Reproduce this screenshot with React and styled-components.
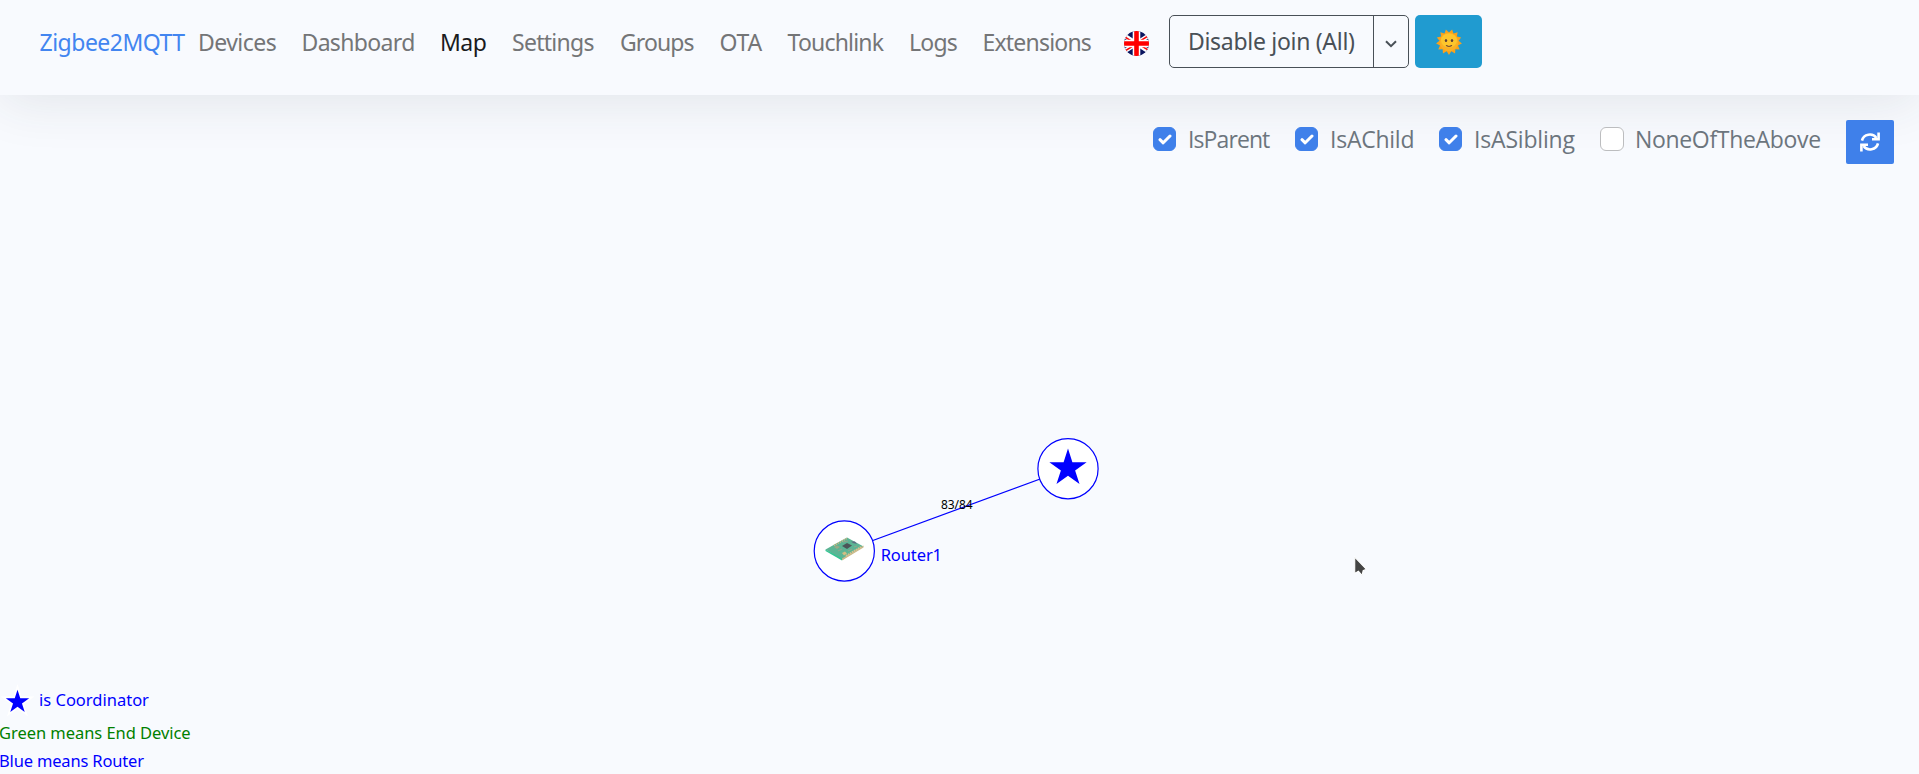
import React from 'react';
import styled, { createGlobalStyle } from 'styled-components';

const GlobalStyle = createGlobalStyle`
  *, *::before, *::after { box-sizing: border-box; }
  body {
    margin: 0;
    background: #f8fafe;
    color: #495057;
    font-family: "Noto Sans", "Open Sans", sans-serif;
  }
`;

const Page = styled.div`
  display: flex;
  flex-direction: column;
  height: 774px;
  overflow: hidden;
`;

const Navbar = styled.nav`
  display: flex;
  align-items: flex-start;
  height: 95px;
  padding: 15px 0 0 39.5px;
  flex: none;
  box-shadow: 0 6px 54px rgba(41, 58, 66, 0.11);
`;

const Brand = styled.a`
  width: 146.5px;
  line-height: 54px;
  font-size: 23px;
  letter-spacing: -0.5px;
  white-space: nowrap;
  color: #4285f0;
`;

const NavLink = styled.a`
  width: ${(p) => p.$width}px;
  padding-left: 12px;
  line-height: 54px;
  font-size: 23px;
  letter-spacing: ${(p) => p.$tracking}px;
  white-space: nowrap;
  color: ${(p) => (p.$active ? '#1a1b1d' : '#747577')};
`;

const FlagIcon = styled.svg`
  width: 25px;
  height: 25px;
  margin: 16px 20px 0 0;
  flex: none;
`;

const ButtonGroup = styled.div`
  display: flex;
  height: 53px;
  width: 240px;
  border: 1px solid #495057;
  border-radius: 5px;
`;

const JoinButton = styled.button`
  width: 204px;
  padding: 0 0 0 18px;
  border: 0;
  border-right: 1px solid #495057;
  background: none;
  text-align: left;
  font: 23px/51px "Noto Sans", sans-serif;
  letter-spacing: -0.3px;
  white-space: nowrap;
  color: #495057;
`;

const CaretButton = styled.button`
  display: flex;
  flex: 1;
  align-items: center;
  justify-content: center;
  padding: 4px 0 0;
  border: 0;
  background: none;
`;

const ThemeButton = styled.button`
  display: flex;
  align-items: center;
  justify-content: center;
  width: 67px;
  height: 53px;
  margin-left: 6px;
  padding: 0;
  border: 0;
  border-radius: 5px;
  background: #209bd0;
`;

const Filters = styled.form`
  display: flex;
  align-items: flex-start;
  justify-content: flex-end;
  height: 69px;
  padding: 25px 25px 0 0;
  flex: none;
`;

const FilterLabel = styled.label`
  display: flex;
  align-items: center;
  width: ${(p) => p.$width}px;
  height: 38px;
  font-family: "Open Sans", sans-serif;
  font-size: 23px;
  letter-spacing: ${(p) => p.$tracking}px;
  white-space: nowrap;
  color: #6c757d;
`;

const Checkbox = styled.span`
  display: flex;
  align-items: center;
  justify-content: center;
  width: ${(p) => (p.$checked ? 23 : 24)}px;
  height: 24px;
  margin-right: ${(p) => (p.$checked ? 12 : 11)}px;
  flex: none;
  border: 1px solid ${(p) => (p.$checked ? '#3f80ea' : '#bcbdbf')};
  border-radius: 6px;
  background: ${(p) => (p.$checked ? '#3f80ea' : '#fff')};
`;

const RefreshButton = styled.button`
  display: flex;
  align-items: center;
  justify-content: center;
  width: 48px;
  height: 44px;
  padding: 0;
  border: 0;
  border-radius: 2px;
  background: #3f80ea;
`;

const MapArea = styled.main`
  position: relative;
  flex: 1;
`;

const Graph = styled.svg`
  display: block;
  width: 100%;
  height: 100%;
`;

const Legend = styled.div`
  position: absolute;
  left: -1px;
  bottom: 0;
`;

const LegendRow = styled.div`
  display: flex;
  align-items: center;
  height: ${(p) => p.$height}px;
  font-size: 16.5px;
  letter-spacing: ${(p) => p.$tracking}px;
  white-space: nowrap;
  color: ${(p) => p.$color};
`;

const LegendStar = styled.svg`
  width: 36px;
  height: 36px;
  margin: 4px 3px 0 1px;
`;

const Pointer = styled.svg`
  position: absolute;
  left: 1353px;
  top: 391px;
  width: 15px;
  height: 22px;
`;

const links = [
  ['Devices', 103.5, -0.55],
  ['Dashboard', 138.5, -0.66],
  ['Map', 72, -0.5],
  ['Settings', 108, -0.72],
  ['Groups', 99.5, -0.9],
  ['OTA', 68, -0.25],
  ['Touchlink', 121.5, -0.8],
  ['Logs', 73.5, -0.75],
  ['Extensions', 153.5, -0.8],
];

const filters = [
  ['IsParent', 142, -0.9, true],
  ['IsAChild', 144, -0.25, true],
  ['IsASibling', 161, -0.18, true],
  ['NoneOfTheAbove', 246, -0.33, false],
];

function starPoints(cx, cy, r) {
  return Array.from({ length: 10 }, (_, i) => {
    const a = -Math.PI / 2 + (i * Math.PI) / 5;
    const d = i % 2 ? r * 0.382 : r;
    return `${(cx + d * Math.cos(a)).toFixed(2)},${(cy + d * Math.sin(a)).toFixed(2)}`;
  }).join(' ');
}

function Flag() {
  return (
    <FlagIcon viewBox="0 0 25 25">
      <clipPath id="disc"><circle cx="12.5" cy="12.5" r="12.5" /></clipPath>
      <g clipPath="url(#disc)">
        <rect width="25" height="25" fill="#0a1560" />
        <path d="M-2 3 27 22M27 3-2 22" stroke="#fff" strokeWidth="4.4" />
        <path d="M-2 4 12 13M13 12 27 3M12 13-2 22M13 12 27 21" stroke="#f00" strokeWidth="1.5" />
        <path d="M12.5 0V25M0 12.5H25" stroke="#fff" strokeWidth="7.6" />
        <path d="M12.5 0V25M0 12.5H25" stroke="#f00" strokeWidth="4.6" />
      </g>
    </FlagIcon>
  );
}

function Sun() {
  const rays = Array.from({ length: 26 }, (_, i) => {
    const a = -Math.PI / 2 + ((i + 1) * Math.PI) / 13;
    const d = i % 2 ? 9.6 : 13;
    return `${(13 + d * Math.cos(a)).toFixed(2)},${(13 + d * Math.sin(a)).toFixed(2)}`;
  }).join(' ');
  return (
    <svg width="26" height="26" viewBox="0 0 26 26">
      <polygon points={rays} fill="#f9a21b" />
      <circle cx="13" cy="13" r="9.2" fill="#fbb024" />
      <ellipse cx="13" cy="11.5" rx="8" ry="7" fill="#fdc62c" />
      <ellipse cx="10" cy="11.4" rx="1.2" ry="1.5" fill="#5d4037" />
      <ellipse cx="16" cy="11.4" rx="1.2" ry="1.5" fill="#5d4037" />
      <path d="M10.4 16.6Q13 18.4 15.6 16.6" fill="none" stroke="#795033" strokeWidth="1.2" strokeLinecap="round" />
    </svg>
  );
}

function Board() {
  return (
    <g>
      <path d="M825.5 549.5 847 537.5 863.5 546.5 842 560Z" fill="#5cb494" />
      <path d="M825.5 549.5 842 558.5V560.5L825.5 551Z" fill="#35c493" />
      <path d="M842 558.5 863.5 545.5V547.5L842 560.5Z" fill="#c9b98a" />
      <path d="M834 545.5 847.5 538" stroke="#c9b98a" strokeWidth="1.6" strokeDasharray="1.4 .8" />
      <path d="M846 556 861 547" stroke="#d8c090" strokeWidth="2" strokeDasharray="1.6 .7" />
      <path d="M842 546 847 543 852 545.5 847 549Z" fill="#4c5558" />
      <path d="M851 541.5 855 541.5 857 544 853 543Z" fill="#5f6a82" />
      <path d="M834 547 837 545.5 840 547 837 549Z" fill="#9ba886" />
      <path d="M842 553 845 551.5 847 553.5 844 555.5Z" fill="#d3bd82" />
      <path d="M838 551 842 549M848 551 852 549M854 547 857 546M843 542 848 541" stroke="#92a58d" strokeWidth="1.2" />
    </g>
  );
}

export default function App() {
  return (
    <Page>
      <GlobalStyle />
      <Navbar>
        <Brand>Zigbee2MQTT</Brand>
        {links.map(([name, width, tracking]) => (
          <NavLink key={name} $width={width} $tracking={tracking} $active={name === 'Map'}>{name}</NavLink>
        ))}
        <Flag />
        <ButtonGroup>
          <JoinButton>Disable join (All)</JoinButton>
          <CaretButton aria-label="Choose device">
            <svg width="12" height="8" viewBox="0 0 12 8">
              <path d="M1 1.2 6 6.2 11 1.2" fill="none" stroke="#495057" strokeWidth="2" />
            </svg>
          </CaretButton>
        </ButtonGroup>
        <ThemeButton aria-label="Theme"><Sun /></ThemeButton>
      </Navbar>
      <Filters>
        {filters.map(([name, width, tracking, checked]) => (
          <FilterLabel key={name} $width={width} $tracking={tracking}>
            <Checkbox $checked={checked}>
              {checked && (
                <svg width="14" height="11" viewBox="0 0 14 11">
                  <path d="M2 5.7 5.2 8.8 12 2" fill="none" stroke="#fff" strokeWidth="3" strokeLinecap="round" strokeLinejoin="round" />
                </svg>
              )}
            </Checkbox>
            {name}
          </FilterLabel>
        ))}
        <RefreshButton type="button" aria-label="Refresh">
          <svg width="20" height="20" viewBox="0 0 20 20" fill="none" stroke="#fff" strokeWidth="2.6">
            <path d="M2 8.6A8 7.6 0 0 1 16.5 6M18 11.4A8 7.6 0 0 1 3.5 14" />
            <path d="M18.6.6V7.2H12M1.4 19.4V12.8H8" />
          </svg>
        </RefreshButton>
      </Filters>
      <MapArea>
        <Graph viewBox="0 164 1919 610">
          <path d="M844.3 551 1068 468.7" stroke="#00f" strokeWidth="1.2" />
          <circle cx="1068" cy="468.7" r="30.1" fill="#fff" stroke="#00f" strokeWidth="1.2" />
          <polygon points={starPoints(1068, 468.2, 19.6)} fill="#00f" />
          <circle cx="844.3" cy="551" r="30.1" fill="#fff" stroke="#00f" strokeWidth="1.2" />
          <Board />
          <text x="880.7" y="561" fontSize="16.5" letterSpacing="-.1" fill="#00f">Router1</text>
          <text x="941" y="508.7" fontSize="12" letterSpacing="-.1" fill="#000">83/84</text>
        </Graph>
        <Legend>
          <LegendRow $height={37} $color="#00f" $tracking={0}>
            <LegendStar viewBox="0 0 36 36">
              <polygon points={starPoints(17.5, 18, 18)} fill="#fff" />
              <polygon points={starPoints(17.5, 18, 12.3)} fill="#00f" />
            </LegendStar>
            is Coordinator
          </LegendRow>
          <LegendRow $height={28} $color="#008000" $tracking={-0.05}>Green means End Device</LegendRow>
          <LegendRow $height={28} $color="#00f" $tracking={-0.17}>Blue means Router</LegendRow>
        </Legend>
        <Pointer viewBox="0 0 14 21">
          <path d="M1.5 2V17.5L5 15.5 8.5 19.5 9.5 15 12.5 13.5Z" fill="#444" stroke="#fff" strokeWidth="1" />
        </Pointer>
      </MapArea>
    </Page>
  );
}
